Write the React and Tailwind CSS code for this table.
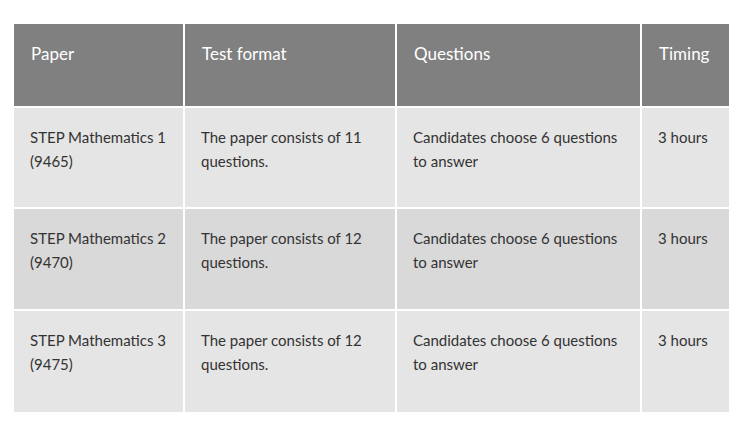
export default function App() {
  const rows = [
    ["STEP Mathematics 1 (9465)", "The paper consists of 11 questions.", "Candidates choose 6 questions to answer", "3 hours"],
    ["STEP Mathematics 2 (9470)", "The paper consists of 12 questions.", "Candidates choose 6 questions to answer", "3 hours"],
    ["STEP Mathematics 3 (9475)", "The paper consists of 12 questions.", "Candidates choose 6 questions to answer", "3 hours"],
  ];
  const heads = ["Paper", "Test format", "Questions", "Timing"];
  const heights = ["h-[99px]", "h-[100px]", "h-[101px]"];
  return (
    <div className="w-[748px] h-[434px] bg-white pt-[24px] pl-[14px]" style={{ fontFamily: "Lato, 'Liberation Sans', sans-serif" }}>
      <div className="grid grid-cols-[169px_210px_243px_87px] gap-[2px] w-[717px]">
        {heads.map((h) => (
          <div key={h} className="bg-[#808080] text-white text-[17px] h-[82px] pl-[17px] pt-[18px] leading-[24px]">
            {h}
          </div>
        ))}
        {rows.map((r, i) =>
          r.map((c, j) => (
            <div
              key={i + "-" + j}
              className={`${i === 1 ? "bg-[#d9d9d9]" : "bg-[#e5e5e5]"} ${heights[i]} text-[#333333] text-[15px] leading-[24px] pt-[17px] ${j === 3 ? "pl-[16px] pr-[6px]" : "pl-[16px] pr-[12px]"}`}
            >
              {c}
            </div>
          ))
        )}
      </div>
    </div>
  );
}
